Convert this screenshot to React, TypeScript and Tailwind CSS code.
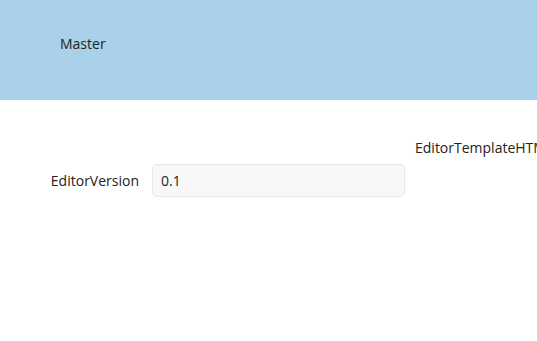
export default function App() {
  const font = { fontFamily: '"Open Sans", "Noto Sans CJK JP", sans-serif' };
  return (
    <div className="w-[537px] h-[341px] overflow-hidden bg-white text-[14px] text-[#222]" style={font}>
      <div className="h-[100px] bg-[#a9d1e9] pl-[60px] pt-[37px]">
        <span className="block leading-[14px]">Master</span>
      </div>
      <div className="flex items-start pt-[41px]">
        <div className="flex items-center mt-[23px] w-[405px]">
          <div className="w-[140px] text-right pr-[1px] leading-none">EditorVersion</div>
          <div className="ml-[12px] w-[253px] h-[33px] rounded-[5px] border border-[#e6e6e6] bg-[#f8f8f8] flex items-center pl-[8px] leading-none">
            0.1
          </div>
        </div>
        <div className="ml-[10px] whitespace-nowrap leading-[14px]">EditorTemplateHTML</div>
      </div>
    </div>
  );
}
